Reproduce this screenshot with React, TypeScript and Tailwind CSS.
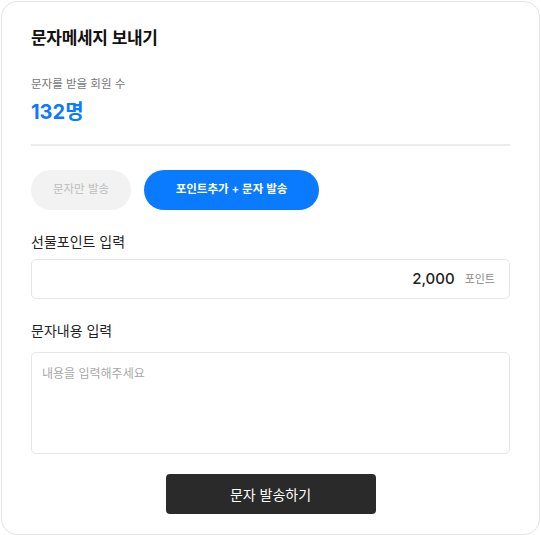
import * as React from "react"

const SmsSendCard: React.FC = () => {
  const [mode, setMode] = React.useState<"sms" | "point">("point")
  const [point, setPoint] = React.useState("2,000")
  const [message, setMessage] = React.useState("")

  return (
    <div className="min-h-screen bg-white p-px font-['Inter','Noto_Sans_CJK_KR',sans-serif]">
      <div className="flex w-[539px] flex-col rounded-[16px] border border-[#e4e4e4] bg-white px-[29px] pb-[20px] pt-[24px]">
        <h1 className="text-[17px] font-semibold leading-[24px] tracking-[-0.3px] text-[#111]">
          문자메세지 보내기
        </h1>

        <p className="mt-[25px] text-[11.5px] leading-[18px] text-[#777]">
          문자를 받을 회원 수
        </p>
        <p className="mt-[5px] text-[20px] font-bold leading-[28px] text-[#0a7aff]">
          132명
        </p>

        <div className="mt-[18px] h-[2px] w-full bg-[#ececec]" />

        <div className="mt-[24px] flex gap-[13px]">
          <button
            type="button"
            onClick={() => setMode("sms")}
            className={
              mode === "sms"
                ? "h-[40px] w-[100px] rounded-full bg-[#0a7aff] text-[11.5px] font-semibold text-white"
                : "h-[40px] w-[100px] rounded-full bg-[#f2f2f2] text-[11.5px] text-[#bdbdbd]"
            }
          >
            문자만 발송
          </button>
          <button
            type="button"
            onClick={() => setMode("point")}
            className={
              mode === "point"
                ? "h-[40px] w-[175px] rounded-full bg-[#0a7aff] text-[11.5px] font-semibold text-white"
                : "h-[40px] w-[175px] rounded-full bg-[#f2f2f2] text-[11.5px] text-[#bdbdbd]"
            }
          >
            포인트추가 + 문자 발송
          </button>
        </div>

        <label className="mt-[22px] text-[14px] leading-[20px] text-[#222]">
          선물포인트 입력
        </label>
        <div className="mt-[7px] flex h-[40px] items-center rounded-[5px] border border-[#e6e6e6] pl-4 pr-[14px]">
          <input
            className="min-w-0 flex-1 bg-transparent text-right text-[15px] font-medium text-[#222] focus:outline-none"
            value={point}
            onChange={(e) => setPoint(e.target.value)}
          />
          <span className="ml-[10px] text-[11px] text-[#888]">포인트</span>
        </div>

        <label className="mt-[22px] text-[14px] leading-[20px] text-[#222]">
          문자내용 입력
        </label>
        <textarea
          className="mt-[11px] h-[102px] resize-none rounded-[5px] border border-[#e6e6e6] px-[10px] py-[12px] text-[12px] leading-[18px] text-[#222] placeholder:text-[#a8a8a8] focus:outline-none"
          placeholder="내용을 입력해주세요"
          value={message}
          onChange={(e) => setMessage(e.target.value)}
        />

        <button
          type="button"
          className="mx-auto mt-[20px] h-[40px] w-[210px] rounded-[4px] bg-[#2a2a2a] text-[14px] text-white"
        >
          문자 발송하기
        </button>
      </div>
    </div>
  )
}

export default SmsSendCard
